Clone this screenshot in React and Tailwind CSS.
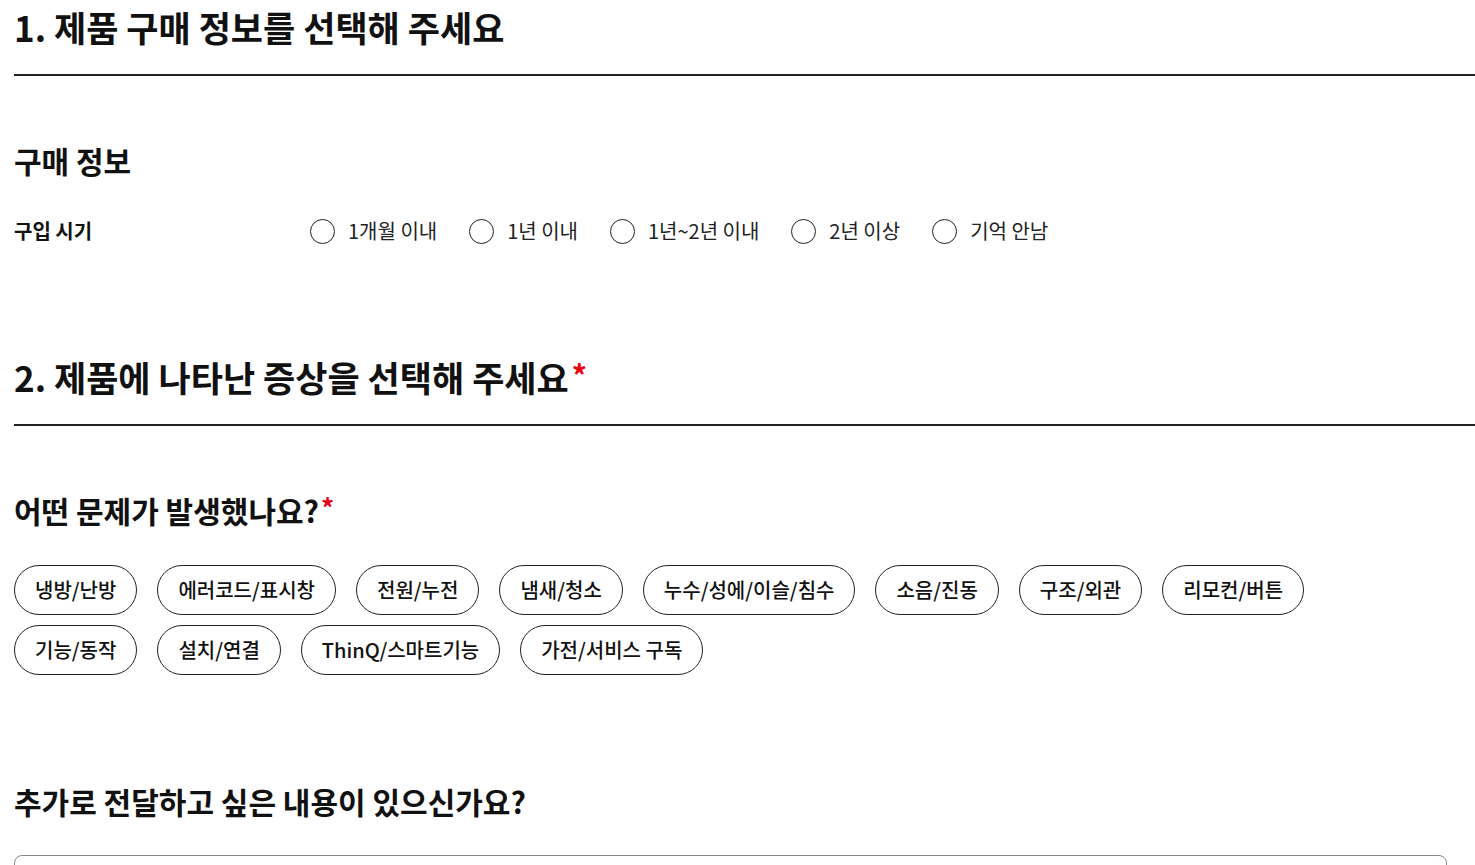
export default function App() {
  const radios = ["1개월 이내", "1년 이내", "1년~2년 이내", "2년 이상", "기억 안남"];
  const chips = [
    "냉방/난방",
    "에러코드/표시창",
    "전원/누전",
    "냄새/청소",
    "누수/성에/이슬/침수",
    "소음/진동",
    "구조/외관",
    "리모컨/버튼",
    "기능/동작",
    "설치/연결",
    "ThinQ/스마트기능",
    "가전/서비스 구독",
  ];
  return (
    <div
      className="min-h-[865px] bg-white pl-[14px] text-[#111] overflow-hidden"
      style={{ fontFamily: '"Noto Sans CJK KR", "Noto Sans", sans-serif' }}
    >
      <h2 className="h-[54px] flex items-center text-[35px] font-bold">
        1. 제품 구매 정보를 선택해 주세요
      </h2>
      <div className="mt-[20px] h-[2px] bg-[#222]" />

      <h3 className="mt-[64px] h-[40px] flex items-center text-[30px] font-bold">
        구매 정보
      </h3>
      <div className="mt-[31px] h-[40px] flex items-center">
        <div className="w-[296px] text-[20px] font-bold">구입 시기</div>
        <div className="flex items-center gap-[32px]">
          {radios.map((r) => (
            <label key={r} className="flex items-center gap-[13px] text-[20px] text-[#222]">
              <span className="w-[25px] h-[25px] rounded-full border-[1.5px] border-[#222] bg-white" />
              <span>{r}</span>
            </label>
          ))}
        </div>
      </div>

      <h2 className="mt-[99px] h-[54px] flex items-center text-[35px] font-bold">
        2. 제품에 나타난 증상을 선택해 주세요
        <span className="text-[#e60012] self-start mt-[2px] ml-[3px] text-[30px]">*</span>
      </h2>
      <div className="mt-[20px] h-[2px] bg-[#222]" />

      <h3 className="mt-[64px] h-[40px] flex items-center text-[30px] font-bold">
        어떤 문제가 발생했나요?
        <span className="text-[#e60012] self-start mt-[-3px] ml-[2px] text-[26px]">*</span>
      </h3>
      <div className="mt-[35px] mr-[120px] flex flex-wrap gap-x-[20px] gap-y-[10px]">
        {chips.map((c) => (
          <button
            key={c}
            className="h-[50px] px-[20px] rounded-full border border-[#222] bg-white text-[20px] font-medium text-[#111]"
          >
            {c}
          </button>
        ))}
      </div>

      <h3 className="mt-[106px] h-[40px] flex items-center text-[30px] font-bold">
        추가로 전달하고 싶은 내용이 있으신가요?
      </h3>
      <div className="mt-[34px] mr-[28px] h-[120px] rounded-[8px] border border-[#888]" />
    </div>
  );
}
